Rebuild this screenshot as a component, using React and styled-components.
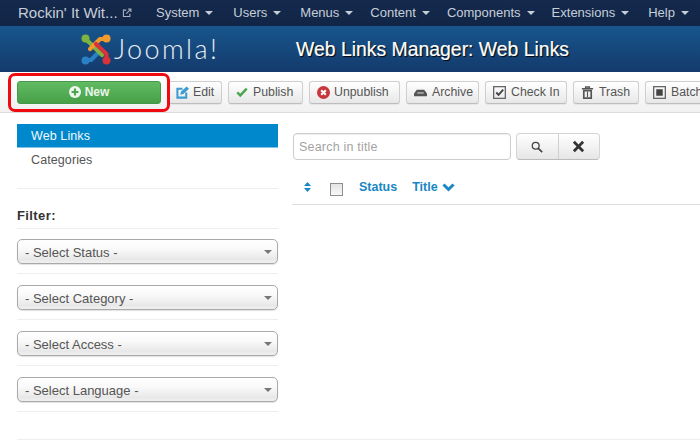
import React from 'react';
import styled, { createGlobalStyle } from 'styled-components';

const Global = createGlobalStyle`
  html, body { margin: 0; padding: 0; background: #fff; }
  body { width: 700px; height: 444px; overflow: hidden; font-family: "Liberation Sans", Arial, sans-serif; }
`;
const Page = styled.div`width:700px;height:444px;overflow:hidden;display:flex;flex-direction:column;`;
const NavBar = styled.nav`
  height:26px;flex:none;display:flex;align-items:center;box-sizing:border-box;padding:0 0 1px 18px;
  background:linear-gradient(#14294d,#122546);color:#c6ced8;font-size:13px;
`;
const Brand = styled.span`font-size:15px;display:flex;align-items:center;gap:4px;width:138px;flex:none;`;
const NavItem = styled.span`display:flex;align-items:center;gap:6px;margin-right:${p=>p.$gap}px;white-space:nowrap;`;
const Caret = styled.i`width:0;height:0;border-left:4px solid transparent;border-right:4px solid transparent;border-top:4px solid ${p=>p.$c||'#c6ced8'};display:block;`;
const Header = styled.header`
  height:46px;flex:none;display:flex;align-items:center;background:linear-gradient(#17568c,#143a6d);
`;
const LogoWrap = styled.div`width:296px;flex:none;box-sizing:border-box;padding-left:81px;display:flex;align-items:center;gap:3px;`;
const LogoText = styled.span`font-family:"Lato","Open Sans",sans-serif;font-weight:300;font-size:27px;line-height:30px;color:#e8edf3;letter-spacing:2.400px;`;
const PageTitle = styled.h1`margin:1px 0 0;font-size:19.4px;font-weight:400;color:#fff;text-shadow:1px 1px 1px #000;-webkit-text-stroke:.2px #fff;`;
const Toolbar = styled.div`
  height:41px;flex:none;box-sizing:border-box;display:flex;align-items:center;padding:0 0 0 17px;gap:6px;overflow:hidden;
  background:linear-gradient(#fff,#f1f1f1);border-bottom:1px solid #dcdcdc;
`;
const NewWrap = styled.div`position:relative;margin-right:1px;flex:none;`;
const Highlight = styled.div`position:absolute;left:-9px;top:-8px;width:156px;height:33px;border:3px solid #ef0a12;border-radius:7px;pointer-events:none;`;
const GreenBtn = styled.div`
  width:144px;height:23px;box-sizing:border-box;border-radius:3px;display:flex;align-items:center;justify-content:center;gap:4px;
  background:linear-gradient(#61bb63,#47a048);border:1px solid #46994a;font-size:12px;font-weight:700;color:#eaf5ea;
`;
const ToolBtn = styled.div`
  width:${p=>p.$w}px;height:23px;flex:none;box-sizing:border-box;border:1px solid #cfcfcf;border-bottom-color:#bdbdbd;border-radius:3px;
  background:linear-gradient(#fff,#e7e7e7);display:flex;align-items:center;gap:${p=>p.$g||5}px;padding-left:7px;font-size:12.300px;color:#555;white-space:nowrap;
  box-shadow:0 1px 1px rgba(0,0,0,.06);
`;
const Body = styled.div`flex:1;display:flex;min-height:0;`;
const Sidebar = styled.aside`width:261px;margin:11px 14px 0 17px;flex:none;`;
const SideItem = styled.div`
  height:${p=>p.$active?24:23}px;box-sizing:border-box;padding-left:14px;display:flex;align-items:center;font-size:12.500px;letter-spacing:.1px;
  background:${p=>p.$active?'#0088cc':'transparent'};color:${p=>p.$active?'#f2f8fc':'#555'};
  border-bottom:${p=>p.$active?'1px solid #7fc4e6':'none'};
`;
const Rule = styled.hr`border:0;border-top:1px solid #eee;margin:${p=>p.$mt||0}px 0 ${p=>p.$mb||0}px;`;
const FilterLabel = styled.div`font-size:13px;font-weight:700;color:#333;line-height:15px;margin-top:19px;letter-spacing:.4px;`;
const Select = styled.div`
  height:25px;box-sizing:border-box;border:1px solid #a9a9a9;border-radius:5px;display:flex;align-items:center;justify-content:space-between;
  padding:1px 5px 0 7px;font-size:13px;color:#555;background:linear-gradient(#fff,#f9f9f9 40%,#e8e8e8 85%,#f0f0f0);
  box-shadow:0 1px 1px rgba(0,0,0,.12);
`;
const Main = styled.main`flex:1;padding-top:20px;min-width:0;`;
const SearchRow = styled.div`display:flex;gap:5px;margin-left:1px;height:27px;`;
const SearchInput = styled.div`
  width:218px;box-sizing:border-box;border:1px solid #ccc;border-radius:4px;display:flex;align-items:center;padding-left:5px;
  color:#a3a3a3;font-size:12.500px;letter-spacing:.2px;box-shadow:inset 0 1px 1px rgba(0,0,0,.07);
`;
const BtnGroup = styled.div`display:flex;width:84px;border:1px solid #d4d4d4;border-bottom-color:#bbb;border-radius:4px;box-sizing:border-box;overflow:hidden;background:linear-gradient(#fff,#e6e6e6);`;
const GroupBtn = styled.div`flex:${p=>p.$f};display:flex;align-items:center;justify-content:center;border-left:${p=>p.$split?'1px solid #d0d0d0':'none'};`;
const TableHead = styled.div`
  height:45px;box-sizing:border-box;border-bottom:1px solid #ddd;display:flex;align-items:center;padding:10px 0 0 12px;
  color:#1a87c5;font-size:12.500px;font-weight:700;
`;
const Sort = styled.svg`flex:none;margin-right:19px;`;
const Check = styled.div`width:13px;height:13px;box-sizing:border-box;border:1px solid #8e8e8e;background:linear-gradient(#e4e4e4,#f8f8f8);margin:5px 16px 0 0;flex:none;`;
const HeadLabel = styled.span`margin-right:15px;display:flex;align-items:center;gap:4px;`;
const Footer = styled.footer`height:4px;flex:none;margin-left:17px;border-top:1px solid #eee;`;

const Logo = () => (
  <svg width="30" height="31" viewBox="0 0 30 31" fill="none" strokeLinecap="round" strokeLinejoin="round" style={{flex:'none'}}>
    <path d="M5 26 L10 26 L20 16" stroke="#2a80c5" strokeWidth="4.200"/>
    <circle cx="4.500" cy="26.500" r="4" fill="#2a80c5"/>
    <path d="M4.500 5 L10 10 L21 21" stroke="#7cb341" strokeWidth="4.200"/>
    <circle cx="4.500" cy="4.500" r="4" fill="#7cb341"/>
    <path d="M25 5 L19 5 L9 15" stroke="#f39a2e" strokeWidth="4.200"/>
    <circle cx="25.500" cy="4.500" r="4" fill="#f39a2e"/>
    <path d="M25.500 25 L25.500 20 L15 10" stroke="#d6333b" strokeWidth="4.200"/>
    <circle cx="25.500" cy="26.500" r="4" fill="#d6333b"/>
  </svg>
);
const Ico = ({w=13,h=13,children}) => <svg width={w} height={h} viewBox="0 0 14 14" fill="none" style={{flex:'none'}}>{children}</svg>;

const nav = [['System',20],['Users',19],['Menus',17],['Content',17],['Components',17],['Extensions',19],['Help',0]];
const selects = ['- Select Status -','- Select Category -','- Select Access -','- Select Language -'];

export default function App() {
  return (
    <Page>
      <Global/>
      <NavBar>
        <Brand>Rockin' It Wit...
          <Ico w={10} h={10}><path d="M11 8v4H2V3h4" stroke="#a9b3c0" strokeWidth="1.500"/><path d="M6 8l6-6M8.500 1.500H12.500V5.500" stroke="#a9b3c0" strokeWidth="1.500"/></Ico>
        </Brand>
        {nav.map(([t,g])=><NavItem key={t} $gap={g}>{t}<Caret/></NavItem>)}
      </NavBar>
      <Header>
        <LogoWrap><Logo/><LogoText>Joomla!</LogoText></LogoWrap>
        <PageTitle>Web Links Manager: Web Links</PageTitle>
      </Header>
      <Toolbar>
        <NewWrap>
          <Highlight/>
          <GreenBtn>
            <Ico w={12} h={12}><circle cx="7" cy="7" r="7" fill="#eef7ee"/><path d="M7 3v8M3 7h8" stroke="#4ca650" strokeWidth="2.500"/></Ico>
            New
          </GreenBtn>
        </NewWrap>
        <ToolBtn $w={54} $g={4}>
          <Ico><path d="M11 7v5.500H1.500V3H7" stroke="#3d9bd1" strokeWidth="2.200"/><path d="M4.500 9.500l1-3.500 6-5.500 2.500 2.500-6 5.500z" fill="#3d9bd1"/></Ico>Edit
        </ToolBtn>
        <ToolBtn $w={75}>
          <Ico w={12} h={12}><path d="M1.500 7.500L5 11l7.500-8" stroke="#4ca650" strokeWidth="2.800"/></Ico>Publish
        </ToolBtn>
        <ToolBtn $w={91} $g={4}>
          <Ico><circle cx="7" cy="7" r="7" fill="#c8373a"/><path d="M4.500 4.500l5 5M9.500 4.500l-5 5" stroke="#fff" strokeWidth="2.200"/></Ico>Unpublish
        </ToolBtn>
        <ToolBtn $w={73}>
          <Ico><path d="M3 4h8l3 4v3H0V8z" fill="#555"/><path d="M3.500 7.500h7" stroke="#eee" strokeWidth="1"/></Ico>Archive
        </ToolBtn>
        <ToolBtn $w={82}>
          <Ico><rect x=".7" y=".7" width="12.600" height="12.600" stroke="#666" strokeWidth="1.400"/><path d="M3.500 7l2.500 2.500L11 4" stroke="#444" strokeWidth="2"/></Ico>Check In
        </ToolBtn>
        <ToolBtn $w={66}>
          <Ico><path d="M1 3h12M5 3V1h4v2" stroke="#555" strokeWidth="1.500"/><path d="M3 5h8v8H3z" stroke="#555" strokeWidth="1.800"/><path d="M7 6v6" stroke="#555" strokeWidth="1.200"/></Ico>Trash
        </ToolBtn>
        <ToolBtn $w={70}>
          <Ico><rect x=".7" y=".7" width="12.600" height="12.600" stroke="#666" strokeWidth="1.400"/><rect x="3.500" y="3.500" width="7" height="7" fill="#444"/></Ico>Batch
        </ToolBtn>
      </Toolbar>
      <Body>
        <Sidebar>
          <SideItem $active>Web Links</SideItem>
          <SideItem>Categories</SideItem>
          <Rule $mt={17}/>
          <FilterLabel>Filter:</FilterLabel>
          <Rule $mt={5} $mb={10}/>
          {selects.map(s=>(
            <React.Fragment key={s}>
              <Select>{s}<Caret $c="#777"/></Select>
              <Rule $mt={9} $mb={11}/>
            </React.Fragment>
          ))}
        </Sidebar>
        <Main>
          <SearchRow>
            <SearchInput>Search in title</SearchInput>
            <BtnGroup>
              <GroupBtn $f={42}>
                <Ico w={12} h={12}><circle cx="5.500" cy="5.500" r="4" stroke="#444" strokeWidth="1.500"/><path d="M8.500 8.500L13 13" stroke="#444" strokeWidth="2"/></Ico>
              </GroupBtn>
              <GroupBtn $f={42} $split>
                <Ico><path d="M2 2l10 10M12 2L2 12" stroke="#333" strokeWidth="3"/></Ico>
              </GroupBtn>
            </BtnGroup>
          </SearchRow>
          <TableHead>
            <Sort width="7" height="10" viewBox="0 0 7 10"><path d="M3.500 0L7 4H0zM3.500 10L0 6h7z" fill="#1a87c5"/></Sort>
            <Check/>
            <HeadLabel>Status</HeadLabel>
            <HeadLabel>Title
              <svg width="13" height="9" viewBox="0 0 13 9" fill="none"><path d="M1.500 1.500l5 5 5-5" stroke="#1a87c5" strokeWidth="3"/></svg>
            </HeadLabel>
          </TableHead>
        </Main>
      </Body>
      <Footer/>
    </Page>
  );
}
